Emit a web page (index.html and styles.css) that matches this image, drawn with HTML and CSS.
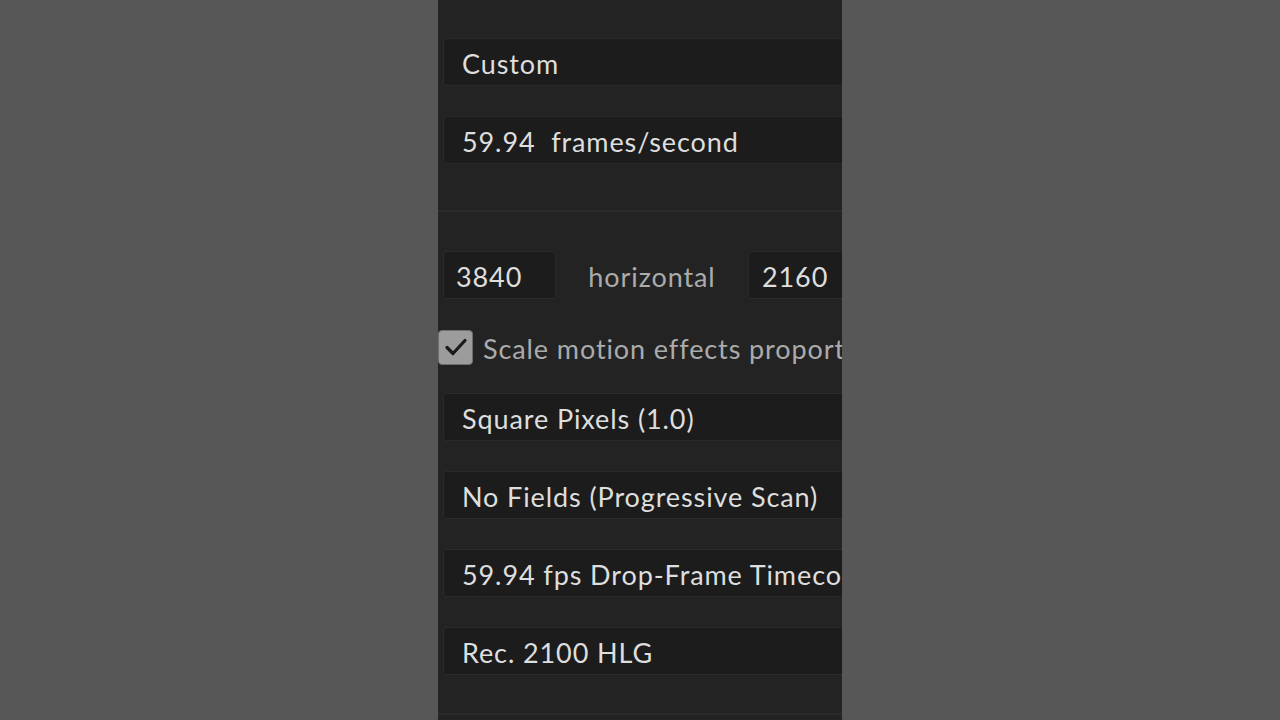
FILE: index.html
```html
<!DOCTYPE html>
<html lang="en">
<head>
<meta charset="utf-8">
<title>Sequence Settings</title>
<link rel="stylesheet" href="styles.css">
</head>
<body>
<div class="stage">
  <div class="panel">
    <div class="field"><span>Custom</span></div>
    <div class="field"><span>59.94&nbsp; frames/second</span></div>
    <div class="divider"></div>
    <div class="size-row">
      <div class="num"><span>3840</span></div>
      <span class="label size-label">horizontal</span>
      <div class="num num-wide"><span>2160</span></div>
    </div>
    <div class="check-row">
      <div class="checkbox">
        <svg width="24" height="20" viewBox="0 0 24 20"><path d="M3 10.5 L9 16.5 L21 3.5" fill="none" stroke="#1a1a1a" stroke-width="3.2" stroke-linecap="round" stroke-linejoin="round"/></svg>
      </div>
      <span class="label">Scale motion effects proportionally</span>
    </div>
    <div class="field"><span>Square Pixels (1.0)</span></div>
    <div class="field"><span>No Fields (Progressive Scan)</span></div>
    <div class="field"><span>59.94 fps Drop-Frame Timecode</span></div>
    <div class="field"><span>Rec. 2100 HLG</span></div>
    <div class="divider bottom"></div>
  </div>
</div>
</body>
</html>
```

FILE: styles.css
```css
* { box-sizing: border-box; }
html, body { margin: 0; padding: 0; }
body {
  width: 1280px;
  height: 720px;
  overflow: hidden;
  background: #575757;
  font-family: "Lato", "Noto Sans", sans-serif;
}
.stage {
  display: flex;
  justify-content: flex-start;
  height: 720px;
  padding-left: 438px;
}
.panel {
  width: 404px;
  height: 720px;
  background: #232323;
  overflow: hidden;
  display: flex;
  flex-direction: column;
  padding-top: 38px;
}
.field {
  flex: none;
  width: 420px;
  height: 48px;
  margin-left: 5px;
  margin-bottom: 30px;
  background: #1c1c1c;
  border: 1px solid #2a2a2a;
  border-radius: 3px;
  display: flex;
  align-items: center;
  padding-left: 18px;
  padding-top: 3px;
  color: #dedede;
  font-size: 27px;
  letter-spacing: 0.9px;
  white-space: nowrap;
}
.divider {
  flex: none;
  height: 2px;
  background: #2b2b2b;
  margin-top: 16px;
  margin-bottom: 39px;
}
.divider.bottom {
  margin-top: 8px;
}
.size-row {
  flex: none;
  display: flex;
  align-items: center;
  height: 48px;
  margin-left: 5px;
  margin-bottom: 30px;
  white-space: nowrap;
}
.num {
  flex: none;
  width: 113px;
  height: 48px;
  background: #1c1c1c;
  border: 1px solid #2a2a2a;
  border-radius: 3px;
  display: flex;
  align-items: center;
  padding-left: 12px;
  padding-top: 3px;
  color: #dedede;
  font-size: 27px;
  letter-spacing: 0.9px;
}
.num-wide { width: 120px; padding-left: 13px; }
.label {
  color: #ababab;
  font-size: 27px;
  letter-spacing: 0.9px;
}
.size-label {
  flex: none;
  width: 192px;
  text-align: center;
  padding-top: 3px;
}
.check-row {
  flex: none;
  display: flex;
  align-items: center;
  height: 36px;
  margin-bottom: 28px;
  white-space: nowrap;
}
.check-row .label { padding-top: 3px; }
.checkbox {
  flex: none;
  width: 35px;
  height: 35px;
  background: #9c9c9c;
  border: 1px solid #6e6e6e;
  border-radius: 4px;
  display: flex;
  align-items: center;
  justify-content: center;
  margin-right: 10px;
}
```
